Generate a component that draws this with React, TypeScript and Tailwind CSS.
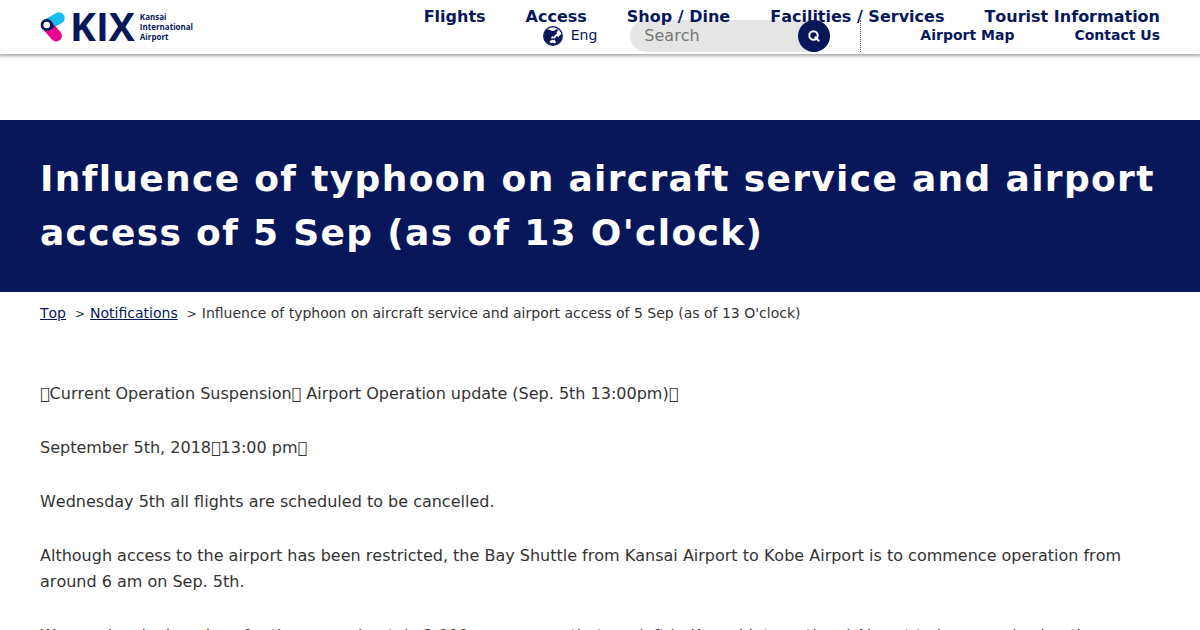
import React from "react";

const navItems = ["Flights", "Access", "Shop / Dine", "Facilities / Services", "Tourist Information"];

function Logo() {
  return (
    <a href="#top" aria-label="KIX Kansai International Airport" className="mt-3 flex items-start text-[#07175a]">
      <svg viewBox="0 0 30 30" className="size-[30px]" aria-hidden="true">
        <g strokeWidth="11.400" strokeLinecap="round">
          <path d="M6.700 13 19 6" stroke="#19bdec" />
          <path d="M6.700 13 16.200 23.800" stroke="#ec008c" />
        </g>
        <path d="M9 7.500 14.500 14.700 9 18.500Z" fill="#07175a" />
        <circle cx="6.700" cy="13" r="4.700" fill="#fff" stroke="#07175a" strokeWidth="2.800" />
      </svg>
      <span className="font-['Open_Sans',sans-serif] text-[39px] leading-[28px] font-bold">KIX</span>
      <span className="ml-[5px] font-['Open_Sans',sans-serif] text-[8px] leading-[10px] font-bold">
        Kansai
        <br />
        International
        <br />
        Airport
      </span>
    </a>
  );
}

function Globe() {
  return (
    <svg viewBox="0 0 20 20" className="size-5" aria-hidden="true">
      <circle cx="10" cy="10" r="9.300" fill="#fff" stroke="#07175a" strokeWidth="1.300" />
      <path d="M1 10C1 7.500 2 5.500 3.500 4L6 3.500 9 5l2.500-.5L14 3l1.500 1-2 2 .5 1.500-2 1.500-1 2-1.500-1L8 11.500 9 13l-2 1.500-1 3C3 16.500 1 13.500 1 10Z" fill="#07175a" />
      <path d="M18.800 8c.8 5-2.800 11-8.800 11-2 0-3-.5-4.500-1.500L8 13.500l2-1.200 2 .2 1.500-2.500 2 1 1.500-2Z" fill="#07175a" />
      <path d="m7 15.500 2-1.800 1.500.6 1-.8 1.500 2.500-1 1.500-2-.8-2.500.6Z" fill="#fff" />
    </svg>
  );
}

function Header() {
  return (
    <header className="flex h-[54px] justify-between bg-white px-10 font-bold text-[#07175a] shadow-[0_1px_3px_1px_rgba(0,0,0,0.35)]">
      <Logo />
      <div className="flex flex-col items-end">
        <nav className="relative z-10 flex h-8 items-center gap-10 pt-0.5 leading-8">
          {navItems.map((item) => (
            <a key={item} href="#nav">{item}</a>
          ))}
        </nav>
        <div className="-mt-3 flex h-8 items-center text-sm">
          <button type="button" className="mr-[33px] flex items-center gap-2 font-normal">
            <Globe />
            <span className="pb-0.5">Eng</span>
          </button>
          <form className="flex h-8 w-[200px] rounded-full bg-[#e5e5e5]" onSubmit={(e) => e.preventDefault()}>
            <input
              type="search"
              aria-label="Search"
              placeholder="Search"
              className="min-w-0 flex-1 bg-transparent pl-3.5 text-base font-normal placeholder:text-[#757575] placeholder:opacity-100"
            />
            <button type="submit" aria-label="Submit search" className="relative z-20 flex size-8 items-center justify-center rounded-full bg-[#07175a]">
              <svg viewBox="0 0 12 12" className="size-3" fill="none" stroke="#fff" strokeWidth="2" aria-hidden="true">
                <circle cx="5.500" cy="5.500" r="4.200" />
                <path d="m6.800 6.800 4.400 4.400" />
              </svg>
            </button>
          </form>
          <span className="ml-[30px] h-8 border-l border-dotted border-[#555]" />
          <a href="#map" className="ml-[59px] pb-0.5">Airport Map</a>
          <a href="#contact" className="ml-[60px] pb-0.5">Contact Us</a>
        </div>
      </div>
    </header>
  );
}

function Crumb({ children }: { children: React.ReactNode }) {
  return (
    <li className="flex items-center">
      <span className="mr-[5px] ml-[9px] pt-0.5 text-xs" aria-hidden="true">&gt;</span>
      {children}
    </li>
  );
}

export default function App() {
  return (
    <div className="h-screen overflow-hidden bg-white font-['DejaVu_Sans',sans-serif] text-[#333] [font-kerning:none]">
      <Header />
      <main className="mt-[66px]">
        <div className="bg-[#07175a] px-10 py-8">
          <h1 className="text-4xl leading-[54px] font-bold tracking-[0.037em] text-white">
            Influence of typhoon on aircraft service and airport access of 5 Sep (as of 13 O'clock)
          </h1>
        </div>
        <nav aria-label="Breadcrumb" className="px-10 pt-[11px] text-sm leading-5">
          <ol className="flex items-center">
            <li><a href="#top" className="text-[#07175a] underline">Top</a></li>
            <Crumb><a href="#notifications" className="text-[#07175a] underline">Notifications</a></Crumb>
            <Crumb>Influence of typhoon on aircraft service and airport access of 5 Sep (as of 13 O'clock)</Crumb>
          </ol>
        </nav>
        <article className="flex flex-col gap-7 px-10 pt-[58px] leading-[26px]">
          <p>{"\uE010Current Operation Suspension\uE010 Airport Operation update (Sep. 5th 13:00pm)\uE010"}</p>
          <p>{"September 5th, 2018\uE01013:00 pm\uE010"}</p>
          <p>Wednesday 5th all flights are scheduled to be cancelled.</p>
          <p>Although access to the airport has been restricted, the Bay Shuttle from Kansai Airport to Kobe Airport is to commence operation from around 6 am on Sep. 5th.</p>
          <p>We are developing plans for the approximately 3,000 passengers that are left in Kansai International Airport to be moved using the transportation services.</p>
        </article>
      </main>
    </div>
  );
}
